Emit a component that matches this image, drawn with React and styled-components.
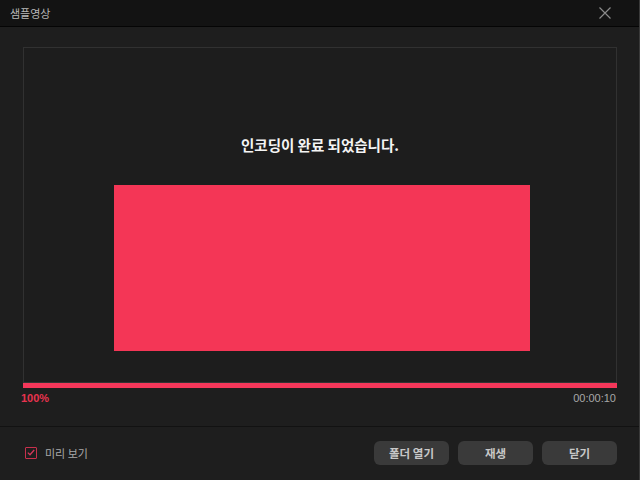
import styled, { createGlobalStyle } from 'styled-components';

const GlobalStyle = createGlobalStyle`
  html, body {
    margin: 0;
    padding: 0;
    background: #1e1e1e;
  }
  * { box-sizing: border-box; }
`;

const Window = styled.div`
  width: 640px;
  height: 480px;
  background: #1e1e1e;
  border-right: 1px solid #3a3a3a;
  display: flex;
  flex-direction: column;
  font-family: "Noto Sans CJK KR", "Noto Sans", sans-serif;
  overflow: hidden;
`;

const TitleBar = styled.div`
  height: 27px;
  flex: none;
  background: #131313;
  border-bottom: 1px solid #050505;
  display: flex;
  align-items: center;
  justify-content: space-between;
  padding: 0 10px 0 10px;
`;

const Title = styled.span`
  color: #b8b8b8;
  font-size: 11px;
  line-height: 26px;
`;

const CloseButton = styled.button`
  width: 16px;
  height: 16px;
  padding: 0;
  margin-right: 16px;
  border: none;
  background: none;
  display: flex;
  align-items: center;
  justify-content: center;
`;

const Body = styled.div`
  padding: 20px 22px 0 23px;
  display: flex;
  flex-direction: column;
`;

const Panel = styled.div`
  height: 335px;
  border: 1px solid #313131;
  border-bottom: none;
  background: #1d1d1d;
  display: flex;
  flex-direction: column;
  align-items: center;
  padding-top: 87px;
`;

const Message = styled.div`
  color: #f4f4f4;
  font-size: 14.5px;
  font-weight: 700;
  line-height: 20px;
`;

const Preview = styled.div`
  width: 416px;
  height: 166px;
  margin-top: 30px;
  margin-left: 4px;
  background: #f43656;
`;

const ProgressTrack = styled.div`
  height: 6px;
  background: #2b2b2b;
  border-top: 1px solid #333;
`;

const ProgressFill = styled.div`
  height: 100%;
  background: #f5375a;
`;

const InfoRow = styled.div`
  display: flex;
  justify-content: space-between;
  align-items: center;
  height: 19px;
  padding: 0 1px 0 0;
  margin-left: -2px;
`;

const Percent = styled.span`
  color: #e8334f;
  font-family: "Liberation Sans", Arial, sans-serif;
  font-size: 11px;
  font-weight: 700;
`;

const Time = styled.span`
  color: #a8a8a8;
  font-family: "Liberation Sans", Arial, sans-serif;
  font-size: 11px;
`;

const Divider = styled.div`
  margin-top: 19px;
  height: 1px;
  background: #121212;
`;

const Footer = styled.div`
  flex: 1;
  display: flex;
  align-items: center;
  justify-content: space-between;
  padding: 0 22px 0 25px;
  margin-top: -2px;
`;

const CheckLabel = styled.label`
  display: flex;
  align-items: center;
  gap: 8px;
  color: #a8a8a8;
  font-size: 11px;
`;

const CheckBox = styled.span`
  width: 12px;
  height: 12px;
  border: 1.5px solid #c8304c;
  border-radius: 1px;
  display: flex;
  align-items: center;
  justify-content: center;
`;

const Buttons = styled.div`
  display: flex;
  gap: 9px;
`;

const Button = styled.button`
  width: 75px;
  height: 24px;
  border: none;
  border-radius: 6px;
  background: #3a3a3a;
  color: #c8c8c8;
  font-family: "Noto Sans CJK KR", "Noto Sans", sans-serif;
  font-size: 11.5px;
  font-weight: 700;
  padding: 0;
`;

export default function App() {
  const progress = 100;
  return (
    <>
      <GlobalStyle />
      <Window>
        <TitleBar>
          <Title>샘플영상</Title>
          <CloseButton aria-label="닫기">
            <svg width="12" height="12" viewBox="0 0 12 12">
              <path d="M0.5 0.5 L11.5 11.5 M11.5 0.5 L0.5 11.5" stroke="#8a8a8a" strokeWidth="1.2" />
            </svg>
          </CloseButton>
        </TitleBar>
        <Body>
          <Panel>
            <Message>인코딩이 완료 되었습니다.</Message>
            <Preview />
          </Panel>
          <ProgressTrack>
            <ProgressFill style={{ width: `${progress}%` }} />
          </ProgressTrack>
          <InfoRow>
            <Percent>{progress}%</Percent>
            <Time>00:00:10</Time>
          </InfoRow>
        </Body>
        <Divider />
        <Footer>
          <CheckLabel>
            <CheckBox>
              <svg width="8" height="7" viewBox="0 0 8 7">
                <path d="M0.8 3.6 L3 5.8 L7.2 1" fill="none" stroke="#d6385a" strokeWidth="1.3" />
              </svg>
            </CheckBox>
            미리 보기
          </CheckLabel>
          <Buttons>
            <Button>폴더 열기</Button>
            <Button>재생</Button>
            <Button>닫기</Button>
          </Buttons>
        </Footer>
      </Window>
    </>
  );
}
